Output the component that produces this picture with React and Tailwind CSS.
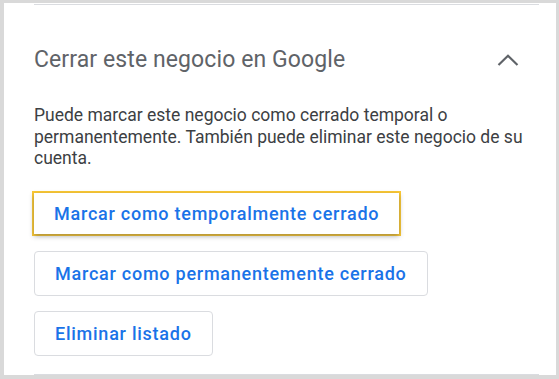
import React from "react";

function ChevronUp() {
  return (
    <svg width="22" height="12" viewBox="0 0 22 12" fill="none">
      <path d="M1.5 11 L11 1.8 L20.5 11" stroke="#5f6368" strokeWidth="2.2" />
    </svg>
  );
}

const btn =
  "h-[45px] px-[20px] rounded-[4px] border border-[#dadce0] bg-white text-[#1a73e8] text-[18px] font-medium tracking-[0.75px] text-left";

export default function App() {
  return (
    <div className="w-[559px] h-[379px] bg-[#d9d9d9] pt-[3px] pl-[4px] pr-[3px] pb-[4px] font-['Roboto',sans-serif]">
      <div className="h-full bg-white pl-[30px] pr-[17px] flex flex-col">
        {/* top divider */}
        <div className="mt-[1px] h-[1px] bg-[#dadce0]" />

        <div className="mt-[41px] flex items-center justify-between pr-[20px]">
          <h2 className="text-[23px] leading-[28px] tracking-[0.1px] text-[#5f6368] font-normal">
            Cerrar este negocio en Google
          </h2>
          <ChevronUp />
        </div>

        <p className="mt-[31px] text-[17.5px] leading-[21.5px] text-[#3c4043] pr-[15px]">
          Puede marcar este negocio como cerrado temporal o permanentemente.
          También puede eliminar este negocio de su cuenta.
        </p>

        <div className="mt-[21px] flex flex-col items-start gap-[15px]">
          {/* focused button, yellow highlight */}
          <div className="-ml-[2px] border-2 border-[#fcc934]">
            <button className="h-[41px] px-[20px] bg-white text-[#1a73e8] text-[18px] font-medium tracking-[0.75px] shadow-[0_2px_5px_rgba(60,64,67,0.45)]">
              Marcar como temporalmente cerrado
            </button>
          </div>
          <button className={btn}>Marcar como permanentemente cerrado</button>
          <button className={btn}>Eliminar listado</button>
        </div>

        <div className="flex-1" />
        {/* bottom divider */}
        <div className="h-[1px] bg-[#dadce0]" />
      </div>
    </div>
  );
}
